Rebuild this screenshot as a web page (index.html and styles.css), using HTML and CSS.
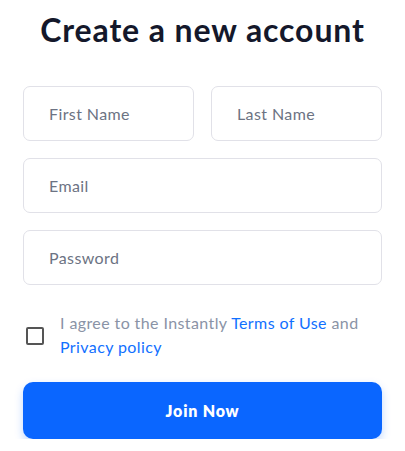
FILE: index.html
```html
<!DOCTYPE html>
<html lang="en">
<head>
<meta charset="utf-8">
<title>Create a new account</title>
<link rel="stylesheet" href="styles.css">
</head>
<body>
<main class="signup">
  <h1 class="title">Create a new account</h1>
  <form class="form">
    <div class="row two">
      <input class="field" type="text" placeholder="First Name">
      <input class="field" type="text" placeholder="Last Name">
    </div>
    <input class="field" type="email" placeholder="Email">
    <input class="field" type="password" placeholder="Password">
    <label class="agree">
      <span class="box"></span>
      <span class="agree-text">I agree to the Instantly <a href="#" class="link">Terms of Use</a> and <a href="#" class="link">Privacy policy</a></span>
    </label>
    <button type="button" class="join">Join Now</button>
  </form>
</main>
</body>
</html>
```
FILE: styles.css
```css
* { box-sizing: border-box; }
html, body { margin: 0; padding: 0; background: #ffffff; }
body { font-family: "Lato", "Noto Sans", sans-serif; }
.signup { padding: 0 23px; }
.title {
  margin: 10px 0 0;
  font-size: 32px;
  line-height: 40px;
  font-weight: 700;
  color: #14182b;
  text-align: center;
  letter-spacing: 0.9px;
}
.form {
  margin-top: 36px;
  display: flex;
  flex-direction: column;
  gap: 17px;
}
.row.two {
  display: grid;
  grid-template-columns: 1fr 1fr;
  gap: 17px;
}
.field {
  display: block;
  width: 100%;
  height: 55px;
  border: 1px solid #e1e1e8;
  border-radius: 7px;
  padding: 0 25px;
  font-family: inherit;
  font-size: 16px;
  letter-spacing: 0.4px;
  color: #333;
  background: #fff;
  outline: none;
}
.field::placeholder { color: #6c7383; opacity: 1; }
.agree {
  display: flex;
  align-items: center;
  gap: 16px;
  margin-top: 10px;
  padding-left: 3px;
}
.box {
  flex: none;
  width: 18px;
  height: 18px;
  border: 2px solid #555;
  border-radius: 2px;
}
.agree-text {
  font-size: 16px;
  line-height: 24px;
  letter-spacing: 0.4px;
  color: #8a93a6;
  margin-top: -1px;
}
.link { color: #1170ff; text-decoration: none; }
.join {
  margin-top: 6px;
  height: 57px;
  border: none;
  border-radius: 10px;
  background: #0a66ff;
  color: #fff;
  font-family: inherit;
  font-size: 16px;
  font-weight: 800;
  letter-spacing: 0.8px;
  box-shadow: 0 4px 8px rgba(10, 102, 255, 0.25);
}
```
